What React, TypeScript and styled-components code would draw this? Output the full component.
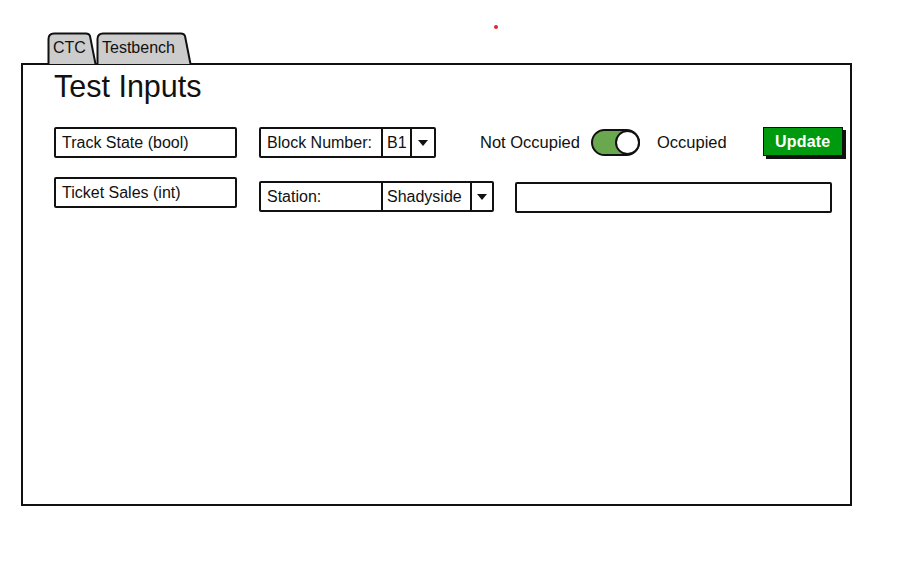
import styled, { createGlobalStyle } from 'styled-components';

const GlobalStyle = createGlobalStyle`
  body {
    margin: 0;
    background: #ffffff;
    font-family: "Liberation Sans", Arial, sans-serif;
    color: #111111;
  }
`;

const Page = styled.div`
  position: relative;
  width: 903px;
  height: 572px;
  padding: 32px 0 0 21px;
  box-sizing: border-box;
`;

const Dot = styled.span`
  position: absolute;
  top: 25px;
  left: 494px;
  width: 4px;
  height: 4px;
  border-radius: 50%;
  background: #e3262a;
`;

const TabBar = styled.div`
  display: flex;
  align-items: flex-end;
  height: 32px;
  margin-left: 26px;
  margin-bottom: -1px;
  position: relative;
  z-index: 1;
`;

const TabWrap = styled.div<{ $width: number }>`
  position: relative;
  width: ${p => p.$width}px;
  height: 32px;
  margin-right: -1px;
  box-sizing: border-box;
  padding: 7px 0 0 6px;
  font-size: 16px;
  line-height: 17px;
`;

const TabShape = styled.svg`
  position: absolute;
  inset: 0;
  z-index: -1;
`;

const Tab = ({ label, width }: { label: string; width: number }) => (
  <TabWrap $width={width}>
    <TabShape width={width} height={32} viewBox={`0 0 ${width} 32`}>
      <path
        d={`M1.5,32 L1.5,7 Q1.5,1.5 7,1.5 L${width - 11},1.5 Q${width - 8},1.5 ${width - 7},4 L${width - 1.5},32`}
        fill="#cccccc"
        stroke="#111"
        strokeWidth="2"
      />
    </TabShape>
    {label}
  </TabWrap>
);

const Panel = styled.div`
  width: 831px;
  height: 443px;
  border: 2px solid #111;
  box-sizing: border-box;
  padding: 4px 0 0 31px;
  background: #fff;
`;

const Title = styled.h1`
  margin: 0 0 24px 0;
  font-size: 30.5px;
  line-height: 34px;
  font-weight: 400;
`;

const Row = styled.div<{ $mb?: number }>`
  display: flex;
  align-items: flex-start;
  margin-bottom: ${p => p.$mb || 0}px;
`;

const Box = styled.div<{ $w: number; $ml?: number; $mt?: number }>`
  width: ${p => p.$w}px;
  height: 31px;
  margin-left: ${p => p.$ml || 0}px;
  margin-top: ${p => p.$mt || 0}px;
  border: 2px solid #111;
  border-radius: 2px;
  box-sizing: border-box;
  padding: 0 6px;
  display: flex;
  align-items: center;
  font-size: 16px;
`;

const Combo = styled.div<{ $ml?: number; $mt?: number }>`
  display: flex;
  height: 31px;
  margin-left: ${p => p.$ml || 0}px;
  margin-top: ${p => p.$mt || 0}px;
  border: 2px solid #111;
  border-radius: 2px;
  box-sizing: border-box;
  font-size: 16px;
`;

const Cell = styled.div<{ $w: number; $divider?: boolean }>`
  width: ${p => p.$w}px;
  box-sizing: border-box;
  padding-left: ${p => (p.$divider ? 4 : 6)}px;
  display: flex;
  align-items: center;
  border-left: ${p => (p.$divider ? '2px solid #111' : 'none')};
`;

const ArrowCell = styled.div<{ $w: number }>`
  width: ${p => p.$w}px;
  border-left: 2px solid #111;
  display: flex;
  align-items: center;
  justify-content: center;

  &::after {
    content: '';
    border-left: 5px solid transparent;
    border-right: 5px solid transparent;
    border-top: 6px solid #111;
  }
`;

const Label = styled.span<{ $ml?: number }>`
  margin-left: ${p => p.$ml || 0}px;
  font-size: 16.5px;
  line-height: 31px;
`;

const Toggle = styled.div<{ $ml?: number }>`
  width: 49px;
  height: 27px;
  margin: 2px 0 0 ${p => p.$ml || 0}px;
  border: 2px solid #111;
  border-radius: 14px;
  box-sizing: border-box;
  background: #6aa84f;
  display: flex;
  align-items: center;
  justify-content: flex-end;
`;

const Knob = styled.div`
  width: 25px;
  height: 25px;
  margin-right: -2px;
  border: 2px solid #111;
  border-radius: 50%;
  box-sizing: border-box;
  background: #fff;
`;

const Button = styled.button<{ $ml?: number }>`
  width: 80px;
  height: 29px;
  margin: 0 0 0 ${p => p.$ml || 0}px;
  padding: 0;
  border: 1px solid #111;
  background: #009a0e;
  box-shadow: 3px 3px 0 #111;
  color: #fff;
  font-family: inherit;
  font-size: 16px;
  font-weight: 700;
  letter-spacing: 0.2px;
`;

export default function App() {
  return (
    <>
      <GlobalStyle />
      <Page>
        <Dot />
        <TabBar>
          <Tab label="CTC" width={50} />
          <Tab label="Testbench" width={96} />
        </TabBar>
        <Panel>
          <Title>Test Inputs</Title>
          <Row $mb={19}>
            <Box $w={183}>Track State (bool)</Box>
            <Combo $ml={22}>
              <Cell $w={120}>Block Number:</Cell>
              <Cell $w={29} $divider>B1</Cell>
              <ArrowCell $w={22} />
            </Combo>
            <Label $ml={44}>Not Occupied</Label>
            <Toggle $ml={11}>
              <Knob />
            </Toggle>
            <Label $ml={17}>Occupied</Label>
            <Button $ml={36}>Update</Button>
          </Row>
          <Row>
            <Box $w={183}>Ticket Sales (int)</Box>
            <Combo $ml={22} $mt={4}>
              <Cell $w={120}>Station:</Cell>
              <Cell $w={89} $divider>Shadyside</Cell>
              <ArrowCell $w={20} />
            </Combo>
            <Box $w={317} $ml={21} $mt={5} />
          </Row>
        </Panel>
      </Page>
    </>
  );
}
